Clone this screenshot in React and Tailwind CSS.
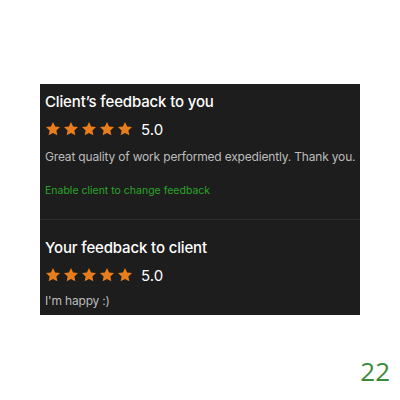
import React from "react";

function Star() {
  return (
    <svg width="16" height="16" viewBox="0 0 24 24" className="shrink-0">
      <path
        d="M12 1.5l3.2 6.7 7.3.9-5.4 5.1 1.4 7.3L12 18l-6.5 3.5 1.4-7.3-5.4-5.1 7.3-.9z"
        fill="#e97d1c"
      />
    </svg>
  );
}

function Rating() {
  return (
    <div className="flex items-center">
      <div className="flex gap-[2px]">
        <Star />
        <Star />
        <Star />
        <Star />
        <Star />
      </div>
      <span className="ml-[8px] text-[15px] leading-none text-white">5.0</span>
    </div>
  );
}

export default function App() {
  return (
    <div
      className="w-[400px] h-[400px] bg-white flex flex-col"
      style={{ fontFamily: "Inter, 'Liberation Sans', sans-serif" }}
    >
      <div className="mt-[84px] ml-[40px] w-[320px] h-[231px] bg-[#1d1d1d] flex flex-col">
        <div className="px-[5px] pt-[8px]">
          <h2 className="text-[15px] tracking-[-0.01em] font-medium leading-[20px] text-white">
            Client’s feedback to you
          </h2>
          <div className="mt-[9px]">
            <Rating />
          </div>
          <p className="mt-[12px] text-[12px] tracking-[-0.015em] leading-[16px] text-[#bcbcbc] whitespace-nowrap">
            Great quality of work performed expediently. Thank you.
          </p>
          <p className="mt-[19px] text-[10.5px] leading-[14px] text-[#2aa52a]">
            Enable client to change feedback
          </p>
        </div>
        <div className="mt-[21px] h-px bg-[#2c2c2c]" />
        <div className="px-[5px] pt-[18px]">
          <h2 className="text-[15px] tracking-[-0.01em] font-medium leading-[20px] text-white">
            Your feedback to client
          </h2>
          <div className="mt-[9px]">
            <Rating />
          </div>
          <p className="mt-[10px] text-[12px] tracking-[-0.015em] leading-[16px] text-[#bcbcbc]">
            I'm happy :)
          </p>
        </div>
      </div>
      <div className="flex justify-end pr-[10px] mt-[43px]">
        <span
          className="text-[26px] leading-none text-[#3b8a3b]"
          style={{ fontFamily: "'Open Sans', sans-serif" }}
        >
          22
        </span>
      </div>
    </div>
  );
}
